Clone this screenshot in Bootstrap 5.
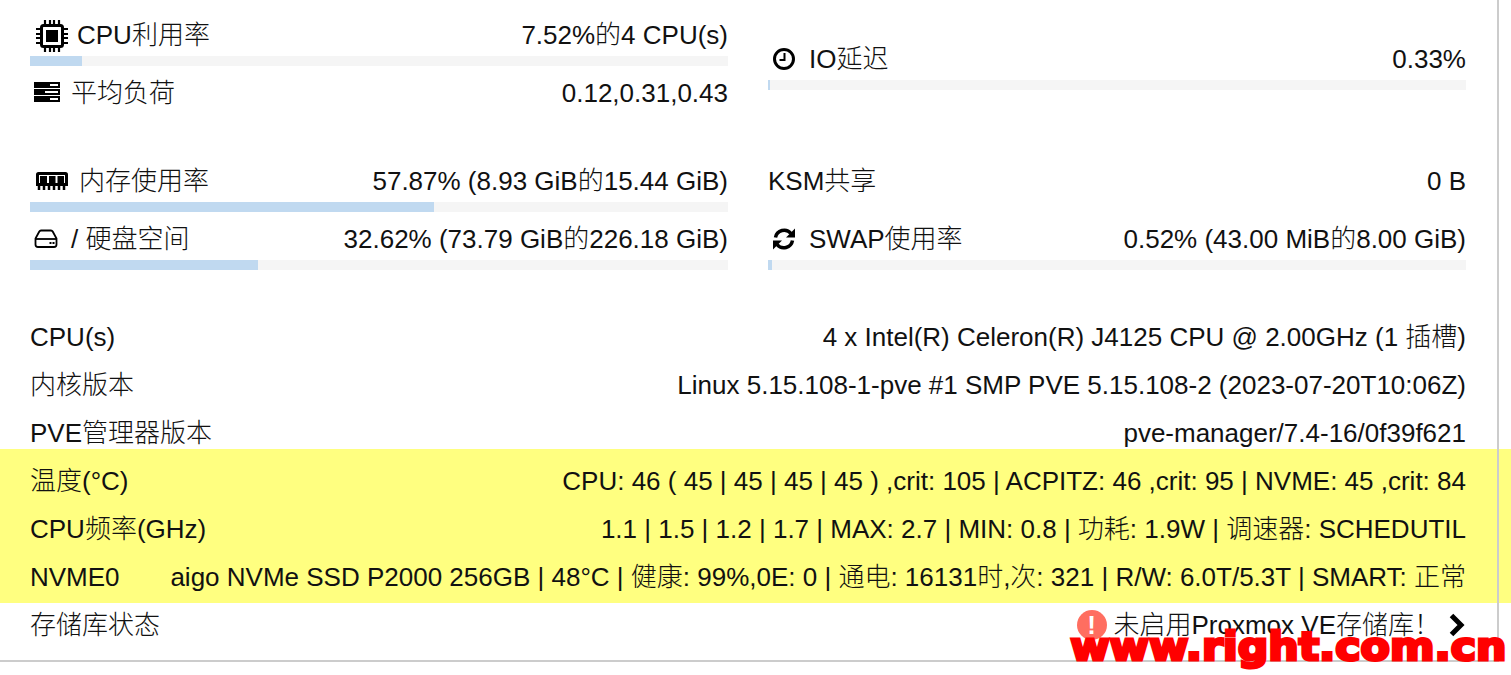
<!DOCTYPE html>
<html lang="zh-CN">
<head>
    <meta charset="UTF-8">
    <meta name="viewport" content="width=device-width, initial-scale=1.0">
    <title>PVE 节点概要</title>
    <link href="https://cdn.jsdelivr.net/npm/bootstrap@5.3.0/dist/css/bootstrap.min.css" rel="stylesheet">
    <style>
        html, body { height: 675px; overflow: hidden; background: #fff; }
        body { font-family: "Liberation Sans", "Noto Sans CJK SC", sans-serif; font-size: 26px; font-weight: 300; line-height: 30px; color: #111; position: relative; }
        .summary-panel { position: relative; width: 1499px; height: 662px; border-bottom: 2px solid #ccc; padding: 20px 33px 0 30px; }
        .summary-panel::after { content: ""; position: absolute; top: 0; right: 0; bottom: 0; width: 2px; background: #ccc; }
        .stat-grid { display: grid; grid-template-columns: 698px 698px; column-gap: 40px; }
        .stat-mem { margin-top: 58px; }
        .stat-col { display: flex; flex-direction: column; }
        .stat-line { height: 30px; }
        .stat-gap { margin-top: 12px; }
        .stat-label { display: flex; align-items: center; }
        .stat-track { height: 10px; background: #f5f5f5; margin-top: 6px; }
        .stat-fill { height: 10px; background: #c0d9f0; }
        .info-rows { margin-top: 43px; }
        .info-row { height: 48px; display: flex; justify-content: space-between; align-items: center; }
        .info-row-end { height: 44px; }
        .hilite-band { background: #ffff80; margin: -8px -45px 0 -30px; padding: 8px 45px 2px 30px; }
        .ico-svg { display: block; flex: none; }
        .ico-gap { margin-right: 13px; }
        .warn-dot { width: 30px; height: 30px; margin-right: 7px; border-radius: 50%; background: #ff6e60; color: #fff; font-weight: 700; display: flex; align-items: center; justify-content: center; }
        .site-mark { position: absolute; right: 5px; top: 624px; font-family: "DejaVu Sans", sans-serif; font-weight: 700; font-size: 39px; line-height: 46px; color: #f00; -webkit-text-stroke: 3px #f00; white-space: nowrap; transform: scaleX(1.095); transform-origin: right center; }
    </style>
</head>
<body>
    <div class="summary-panel">
        <div class="stat-grid">
            <div class="stat-col">
                <div class="stat-line d-flex justify-content-between">
                    <span class="stat-label">
                        <svg class="ico-svg me-2" width="39" height="34" viewBox="0 -2 39 34"><g transform="translate(6 0)"><rect x="5.500" y="5.500" width="21" height="21" rx="2" fill="none" stroke="#000" stroke-width="3"/><rect x="10" y="10" width="12" height="12" fill="#000"/><path d="M9 0v5M14 0v5M18 0v5M23 0v5M9 27v5M14 27v5M18 27v5M23 27v5M0 9h5M0 14h5M0 18h5M0 23h5M27 9h5M27 14h5M27 18h5M27 23h5" stroke="#000" stroke-width="2.200"/></g></svg>
                        CPU利用率
                    </span>
                    <span>7.52%的4 CPU(s)</span>
                </div>
                <div class="stat-track"><div class="stat-fill" style="width: 7.52%"></div></div>
                <div class="stat-line d-flex justify-content-between stat-gap">
                    <span class="stat-label">
                        <svg class="ico-svg me-2" width="33" height="22" viewBox="0 0 33 22"><path d="M4 0h26v6H4zM4 7h26v6H4zM4 14h26v6H4z" fill="#000"/><path d="M20 2h8v2h-8zM15 9h13v2H15zM20 16h8v2h-8z" fill="#fff"/></svg>
                        平均负荷
                    </span>
                    <span>0.12,0.31,0.43</span>
                </div>
            </div>
            <div class="stat-col">
                <div class="stat-line d-flex justify-content-between mt-4">
                    <span class="stat-label">
                        <svg class="ico-svg ms-1 ico-gap" width="24" height="24" viewBox="0 0 24 24"><circle cx="12" cy="12" r="9.500" fill="none" stroke="#000" stroke-width="3"/><path d="M12.500 6v7H7.500" fill="none" stroke="#000" stroke-width="2"/></svg>
                        IO延迟
                    </span>
                    <span>0.33%</span>
                </div>
                <div class="stat-track"><div class="stat-fill" style="width: 0.33%"></div></div>
            </div>
        </div>

        <div class="stat-grid stat-mem">
            <div class="stat-col">
                <div class="stat-line d-flex justify-content-between">
                    <span class="stat-label">
                        <svg class="ico-svg me-2" width="41" height="20" viewBox="0 -1 41 20"><path d="M8.500 1.500h27a1 1 0 0 1 1 1v10h-29v-10a1 1 0 0 1 1-1z" fill="none" stroke="#000" stroke-width="3"/><path d="M10 4h7v7h-7zM19 4h6.500v7H19zM27.500 4H34v7h-6.500z" fill="#000"/><path d="M9 13v5M14 13v5M19 13v5M24 13v5M29 13v5M34 13v5" stroke="#000" stroke-width="2.500"/></svg>
                        内存使用率
                    </span>
                    <span>57.87% (8.93 GiB的15.44 GiB)</span>
                </div>
                <div class="stat-track"><div class="stat-fill" style="width: 57.87%"></div></div>
                <div class="stat-line d-flex justify-content-between stat-gap">
                    <span class="stat-label">
                        <svg class="ico-svg me-2" width="33" height="22" viewBox="0 0 33 22"><path d="M11 2.500h10a2 2 0 0 1 1.700 1l3.800 7v6a2.500 2.500 0 0 1-2.500 2.500H8a2.500 2.500 0 0 1-2.500-2.500v-6l3.800-7a2 2 0 0 1 1.700-1z" fill="none" stroke="#000" stroke-width="1.800"/><path d="M6 11h20" stroke="#000" stroke-width="1.800"/><path d="M19.500 14h2v2h-2zM22.500 14h2v2h-2z" fill="#000"/></svg>
                        / 硬盘空间
                    </span>
                    <span>32.62% (73.79 GiB的226.18 GiB)</span>
                </div>
                <div class="stat-track"><div class="stat-fill" style="width: 32.62%"></div></div>
            </div>
            <div class="stat-col">
                <div class="stat-line d-flex justify-content-between">
                    <span>KSM共享</span>
                    <span>0 B</span>
                </div>
                <div class="stat-track invisible"></div>
                <div class="stat-line d-flex justify-content-between stat-gap">
                    <span class="stat-label">
                        <svg class="ico-svg ms-1 ico-gap" width="24" height="24" viewBox="0 0 24 24"><path d="M3.500 10.500A8.800 8.800 0 0 1 19 6.500" fill="none" stroke="#000" stroke-width="3.500"/><path d="M23 1.500v9h-9z" fill="#000"/><path d="M20.500 13.500A8.800 8.800 0 0 1 5 17.500" fill="none" stroke="#000" stroke-width="3.500"/><path d="M1 22.500v-9h9z" fill="#000"/></svg>
                        SWAP使用率
                    </span>
                    <span>0.52% (43.00 MiB的8.00 GiB)</span>
                </div>
                <div class="stat-track"><div class="stat-fill" style="width: 0.52%"></div></div>
            </div>
        </div>

        <div class="info-rows">
            <div class="info-row"><span>CPU(s)</span><span>4 x Intel(R) Celeron(R) J4125 CPU @ 2.00GHz (1 插槽)</span></div>
            <div class="info-row"><span>内核版本</span><span>Linux 5.15.108-1-pve #1 SMP PVE 5.15.108-2 (2023-07-20T10:06Z)</span></div>
            <div class="info-row"><span>PVE管理器版本</span><span>pve-manager/7.4-16/0f39f621</span></div>
            <div class="hilite-band">
                <div class="info-row"><span>温度(°C)</span><span>CPU: 46 ( 45 | 45 | 45 | 45 ) ,crit: 105 | ACPITZ: 46 ,crit: 95 | NVME: 45 ,crit: 84</span></div>
                <div class="info-row"><span>CPU频率(GHz)</span><span>1.1 | 1.5 | 1.2 | 1.7 | MAX: 2.7 | MIN: 0.8 | 功耗: 1.9W | 调速器: SCHEDUTIL</span></div>
                <div class="info-row"><span>NVME0</span><span>aigo NVMe SSD P2000 256GB | 48°C | 健康: 99%,0E: 0 | 通电: 16131时,次: 321 | R/W: 6.0T/5.3T | SMART: 正常</span></div>
            </div>
            <div class="info-row info-row-end">
                <span>存储库状态</span>
                <span class="d-flex align-items-center">
                    <span class="warn-dot">!</span>
                    未启用Proxmox VE存储库！
                    <svg class="ico-svg ms-2" width="18" height="26" viewBox="0 0 18 26"><path d="M3.500 3.500l9.500 9.500-9.500 9.500" fill="none" stroke="#000" stroke-width="5"/></svg>
                </span>
            </div>
        </div>
    </div>
    <div class="site-mark">www.right.com.cn</div>
    <script src="https://cdn.jsdelivr.net/npm/bootstrap@5.3.0/dist/js/bootstrap.bundle.min.js"></script>
</body>
</html>
